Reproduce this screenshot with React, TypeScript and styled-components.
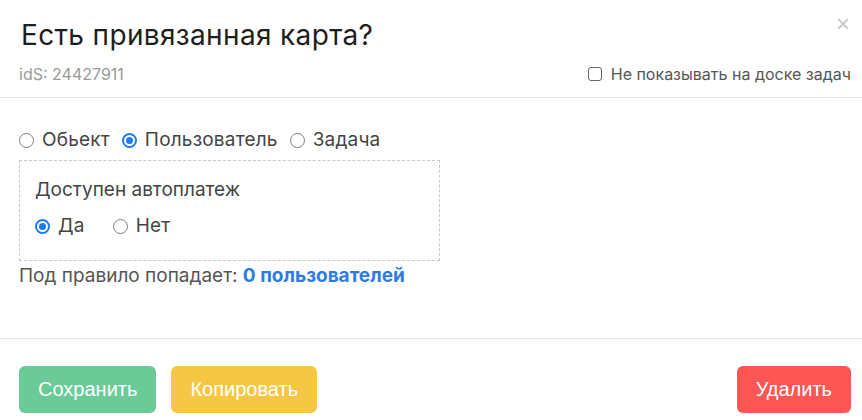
import React from "react";
import styled, { createGlobalStyle } from "styled-components";

const Global = createGlobalStyle`
  html, body { margin: 0; padding: 0; background: #fff; }
  body { font-family: Inter, "Noto Sans", sans-serif; color: #333; }
  * { box-sizing: border-box; }
`;

const Modal = styled.div`
  width: 862px;
  height: 420px;
  display: flex;
  flex-direction: column;
  background: #fff;
`;

const Header = styled.div`
  position: relative;
  height: 98px;
  padding: 17px 11px 0 19px;
  border-bottom: 1px solid #e6e6e6;
  display: flex;
  flex-direction: column;
`;

const Title = styled.h1`
  margin: 0 0 0 2px;
  font-size: 28px;
  line-height: 36px;
  font-weight: 400;
  color: #1e1e1e;
  letter-spacing: 0.35px;
`;

const Close = styled.button`
  position: absolute;
  top: 12px;
  right: 12px;
  border: none;
  background: none;
  color: #c8c8c8;
  font-size: 24px;
  line-height: 24px;
  padding: 0;
  cursor: pointer;
  font-family: "Liberation Sans", sans-serif;
`;

const MetaRow = styled.div`
  margin-top: 11px;
  display: flex;
  align-items: center;
  justify-content: space-between;
`;

const Ids = styled.span`
  font-size: 16px;
  line-height: 20px;
  color: #9a9a9a;
`;

const CheckLabel = styled.label`
  display: flex;
  align-items: center;
  gap: 9px;
  font-size: 16px;
  line-height: 20px;
  color: #555;
`;

const CheckBox = styled.span`
  width: 14px;
  height: 14px;
  border: 1.5px solid #666;
  border-radius: 3px;
  background: #fff;
`;

const Body = styled.div`
  flex: 1;
  padding: 30px 19px 0 19px;
  border-bottom: 1px solid #e6e6e6;
  display: flex;
  flex-direction: column;
  align-items: flex-start;
`;

const RadioRow = styled.div<{ $gap?: number }>`
  display: flex;
  align-items: center;
  gap: ${(p) => p.$gap ?? 12}px;
  height: 24px;
`;

const RadioLabel = styled.label`
  display: flex;
  align-items: center;
  gap: 8px;
  font-size: 19px;
  line-height: 24px;
  letter-spacing: 0.2px;
  color: #444;
`;

const Circle = styled.span<{ $on?: boolean }>`
  width: 15px;
  height: 15px;
  border-radius: 50%;
  border: ${(p) => (p.$on ? "2px solid #1a7cf3" : "1.5px solid #808080")};
  background: #fff;
  display: flex;
  align-items: center;
  justify-content: center;
  &::after {
    content: "";
    display: ${(p) => (p.$on ? "block" : "none")};
    width: 7px;
    height: 7px;
    border-radius: 50%;
    background: #1a7cf3;
  }
`;

const DashedBox = styled.div`
  margin-top: 8px;
  width: 421px;
  height: 101px;
  border: 1px dashed #c9c9c9;
  padding: 17px 15px 0 15px;
  display: flex;
  flex-direction: column;
  gap: 12px;
`;

const BoxTitle = styled.div`
  font-size: 19px;
  line-height: 24px;
  color: #444;
`;

const RuleLine = styled.div`
  margin-top: 3px;
  font-size: 19px;
  line-height: 24px;
  color: #555;
`;

const Count = styled.span`
  color: #2d7be5;
  font-weight: 700;
`;

const Footer = styled.div`
  height: 81px;
  padding: 27px 11px 0 19px;
  display: flex;
  align-items: flex-start;
  gap: 15px;
`;

const Btn = styled.button<{ $bg: string }>`
  height: 47px;
  padding: 0 19px;
  border: none;
  border-radius: 6px;
  background: ${(p) => p.$bg};
  color: #fff;
  font-family: "Liberation Sans", Arial, sans-serif;
  font-size: 20px;
  cursor: pointer;
`;

const Spacer = styled.div`
  flex: 1;
`;

export default function App() {
  return (
    <Modal>
      <Global />
      <Header>
        <Title>Есть привязанная карта?</Title>
        <Close>×</Close>
        <MetaRow>
          <Ids>idS: 24427911</Ids>
          <CheckLabel>
            <CheckBox />
            Не показывать на доске задач
          </CheckLabel>
        </MetaRow>
      </Header>
      <Body>
        <RadioRow $gap={12}>
          <RadioLabel><Circle />Обьект</RadioLabel>
          <RadioLabel><Circle $on />Пользователь</RadioLabel>
          <RadioLabel><Circle />Задача</RadioLabel>
        </RadioRow>
        <DashedBox>
          <BoxTitle>Доступен автоплатеж</BoxTitle>
          <RadioRow $gap={28}>
            <RadioLabel><Circle $on />Да</RadioLabel>
            <RadioLabel><Circle />Нет</RadioLabel>
          </RadioRow>
        </DashedBox>
        <RuleLine>
          Под правило попадает: <Count>0 пользователей</Count>
        </RuleLine>
      </Body>
      <Footer>
        <Btn $bg="#6acb98">Сохранить</Btn>
        <Btn $bg="#f6c744">Копировать</Btn>
        <Spacer />
        <Btn $bg="#fe5555">Удалить</Btn>
      </Footer>
    </Modal>
  );
}
